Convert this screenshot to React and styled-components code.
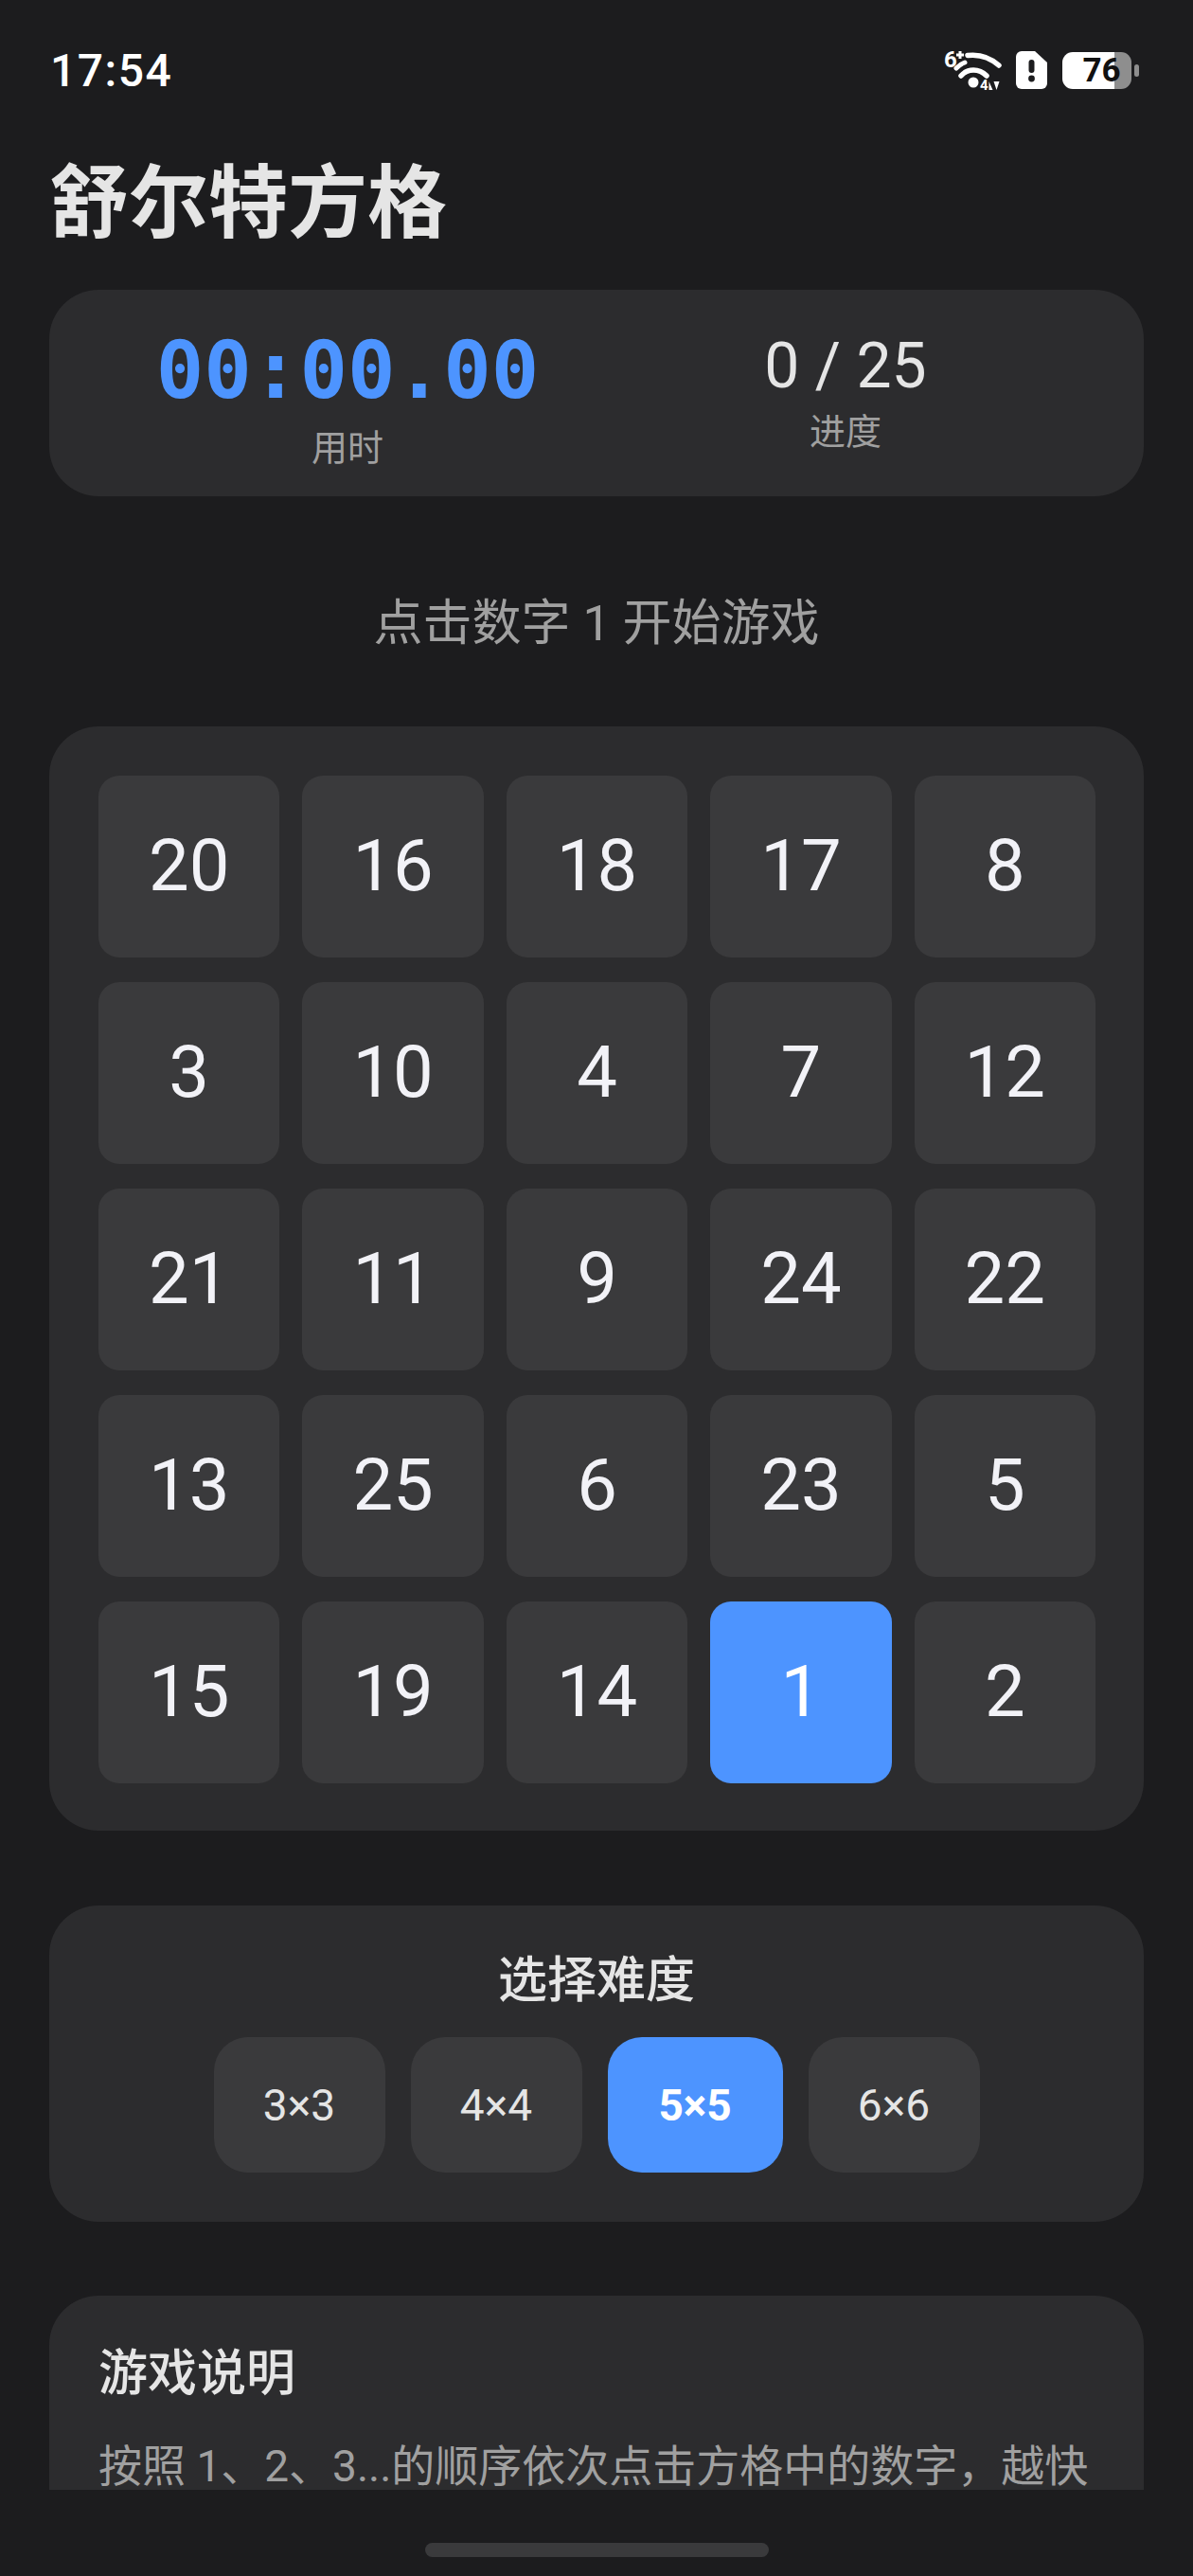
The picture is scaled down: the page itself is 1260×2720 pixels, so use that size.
import React from "react";
import styled, { createGlobalStyle } from "styled-components";

const Global = createGlobalStyle`
  html, body { margin: 0; padding: 0; background: #1c1c1e; }
  * { box-sizing: border-box; }
`;

const sans = `Roboto, "Noto Sans CJK SC", sans-serif`;
const cjk = `"Noto Sans CJK SC", sans-serif`;

const Page = styled.div`
  width: 1260px;
  height: 2720px;
  display: flex;
  flex-direction: column;
  background: #1c1c1e;
  font-family: ${sans};
  overflow: hidden;
`;
const StatusBar = styled.div`
  height: 148px;
  flex: none;
  display: flex;
  align-items: center;
  justify-content: space-between;
  padding: 0 65px 0 53px;
`;
const Clock = styled.div`
  font-size: 48px;
  font-weight: 500;
  letter-spacing: 1.5px;
  color: #fff;
`;
const StatusIcons = styled.div`
  display: flex;
  align-items: center;
  gap: 16px;
`;
const Battery = styled.div`
  position: relative;
  width: 73px;
  height: 39px;
  border-radius: 11px;
  background: linear-gradient(90deg, #fff 0 55px, #8e8e8e 55px 100%);
  display: flex;
  align-items: center;
  justify-content: center;
  font-size: 35px;
  font-weight: 700;
  color: #111;
  padding-left: 10px;
  line-height: 1;
  &::after {
    content: "";
    position: absolute;
    right: -8px;
    top: 13px;
    width: 5px;
    height: 13px;
    border-radius: 2.5px;
    background: #8e8e8e;
  }
`;
const IconSvg = styled.svg`
  display: block;
  overflow: visible;
`;
const Scroll = styled.div`
  flex: 1;
  min-height: 0;
  overflow: hidden;
  padding: 0 52px;
`;
const Title = styled.h1`
  margin: 0 0 35px;
  height: 123px;
  font-family: ${cjk};
  font-size: 84px;
  line-height: 120px;
  font-weight: 700;
  color: #e5e5e5;
`;
const Card = styled.section`
  background: #2c2c2e;
  border-radius: 52px;
`;
const Stats = styled(Card)`
  height: 218px;
  padding: 0 52px;
  display: grid;
  grid-template-columns: 1fr 1fr;
  align-items: center;
`;
const Stat = styled.div`
  display: flex;
  flex-direction: column;
  align-items: center;
`;
const Timer = styled.div`
  font-family: "DejaVu Sans Mono", monospace;
  font-size: 84px;
  font-weight: 700;
  line-height: 100px;
  color: #4d94ff;
  margin-top: 5px;
`;
const Count = styled.div`
  font-size: 66px;
  line-height: 82px;
  color: #e5e5e5;
  margin-top: -6px;
`;
const StatLabel = styled.div`
  font-family: ${cjk};
  font-size: 38px;
  line-height: 50px;
  color: #a0a0a0;
  margin-top: ${p => (p.$low ? 4 : 0)}px;
`;
const Hint = styled.div`
  height: 243px;
  padding-top: 16px;
  display: flex;
  align-items: center;
  justify-content: center;
  font-size: 52px;
  color: #a0a0a0;
`;
const Board = styled(Card)`
  padding: 52px 51px 50px 52px;
  display: grid;
  grid-template-columns: repeat(5, 1fr);
  column-gap: 24px;
  row-gap: 26px;
`;
const Tile = styled.div`
  height: 192px;
  padding-bottom: 3px;
  border-radius: 22px;
  display: flex;
  align-items: center;
  justify-content: center;
  font-size: 76px;
  font-weight: 400;
  color: ${p => (p.$next ? "#fff" : "#f2f2f7")};
  background: ${p => (p.$next ? "#4d94ff" : "#3a3a3c")};
`;
const Difficulty = styled(Card)`
  margin-top: 79px;
  height: 334px;
  padding-top: 52px;
  display: flex;
  flex-direction: column;
  align-items: center;
`;
const SectionTitle = styled.h2`
  margin: 0;
  font-size: 52px;
  line-height: 56px;
  font-weight: 500;
  color: #e5e5e5;
  padding-top: ${p => (p.$low ? 3 : 0)}px;
`;
const Levels = styled.div`
  margin-top: 31px;
  display: flex;
  gap: 27px;
`;
const Level = styled.div`
  height: 143px;
  width: ${p => (p.$active ? 185 : 181)}px;
  border-radius: 36px;
  display: flex;
  align-items: center;
  justify-content: center;
  font-size: 46px;
  font-weight: ${p => (p.$active ? 700 : 400)};
  color: ${p => (p.$active ? "#fff" : "#e5e5e5")};
  background: ${p => (p.$active ? "#4d94ff" : "#3a3a3c")};
`;
const Rules = styled(Card)`
  margin-top: 78px;
  padding: 52px;
  height: 400px;
`;
const RuleText = styled.p`
  margin: 33px 0 0;
  font-size: 46px;
  line-height: 72px;
  color: #a0a0a0;
  white-space: nowrap;
`;
const NavArea = styled.div`
  height: 91px;
  flex: none;
  display: flex;
  justify-content: center;
  padding-top: 56px;
  background: #1c1c1e;
`;
const HomeBar = styled.div`
  width: 363px;
  height: 15px;
  border-radius: 8px;
  background: #3a3a3c;
`;

const Wifi = () => (
  <IconSvg width="60" height="44" viewBox="0 0 60 44" fill="none">
    <text x="0" y="19" fontFamily="Roboto, sans-serif" fontSize="24" fontWeight="700" fill="#fff">6</text>
    <path d="M17 2v8M13 6h8" stroke="#fff" strokeWidth="3" />
    <path d="M25 6.5C37 5 49 9 58 17" stroke="#fff" strokeWidth="5.5" strokeLinecap="round" />
    <path d="M18 28C25 20 37 20 45 28" stroke="#fff" strokeWidth="5.5" strokeLinecap="round" />
    <path d="M13 20C16 17 19 15 22 14" stroke="#fff" strokeWidth="5" strokeLinecap="round" />
    <circle cx="31" cy="35" r="5.5" fill="#fff" />
    <text x="38" y="43" fontFamily="Roboto, sans-serif" fontSize="15" fontWeight="700" fill="#fff">4</text>
    <path d="M47.5 43v-9l4 9zM52.5 34h6l-3 9z" fill="#fff" />
  </IconSvg>
);

const Alert = () => (
  <IconSvg width="33" height="40" viewBox="0 0 33 40">
    <path d="M6 0H20L33 12V34a6 6 0 0 1-6 6H6a6 6 0 0 1-6-6V6a6 6 0 0 1 6-6Z" fill="#fff" />
    <rect x="13.5" y="9" width="6" height="14" rx="3" fill="#1c1c1e" />
    <circle cx="16.5" cy="29" r="3.4" fill="#1c1c1e" />
  </IconSvg>
);

const numbers = [20,16,18,17,8,3,10,4,7,12,21,11,9,24,22,13,25,6,23,5,15,19,14,1,2];
const levels = ["3×3","4×4","5×5","6×6"];

export default function App() {
  return (
    <Page>
      <Global />
      <StatusBar>
        <Clock>17:54</Clock>
        <StatusIcons>
          <Wifi />
          <Alert />
          <Battery>76</Battery>
        </StatusIcons>
      </StatusBar>
      <Scroll>
        <Title>舒尔特方格</Title>
        <Stats>
          <Stat>
            <Timer>00:00.00</Timer>
            <StatLabel $low>用时</StatLabel>
          </Stat>
          <Stat>
            <Count>0 / 25</Count>
            <StatLabel>进度</StatLabel>
          </Stat>
        </Stats>
        <Hint>点击数字 1 开始游戏</Hint>
        <Board>
          {numbers.map(n => (
            <Tile key={n} $next={n === 1}>{n}</Tile>
          ))}
        </Board>
        <Difficulty>
          <SectionTitle>选择难度</SectionTitle>
          <Levels>
            {levels.map(l => (
              <Level key={l} $active={l === "5×5"}>{l}</Level>
            ))}
          </Levels>
        </Difficulty>
        <Rules>
          <SectionTitle $low>游戏说明</SectionTitle>
          <RuleText>按照 1、2、3...的顺序依次点击方格中的数字，越快</RuleText>
        </Rules>
      </Scroll>
      <NavArea><HomeBar /></NavArea>
    </Page>
  );
}
